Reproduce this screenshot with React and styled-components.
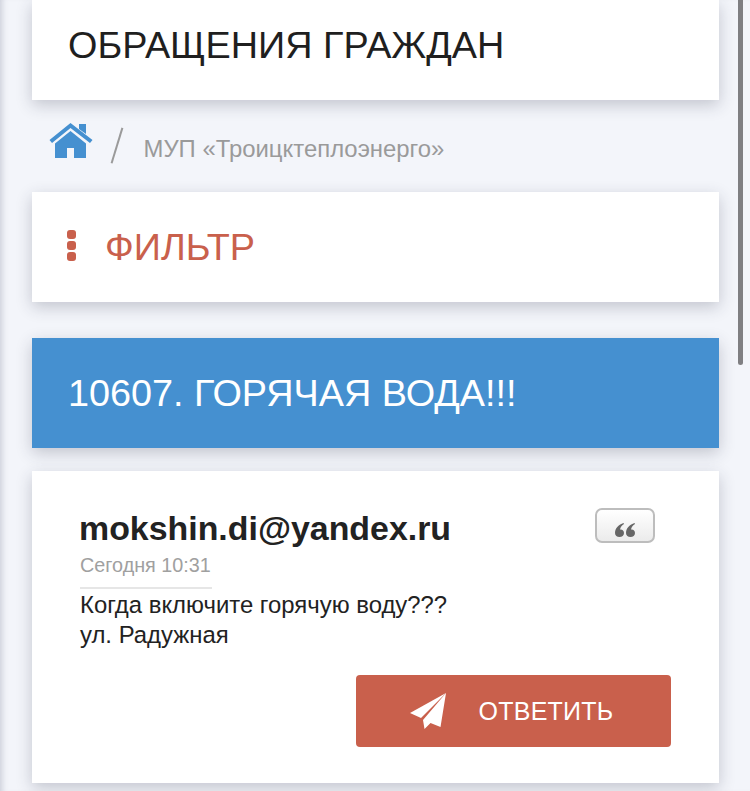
import React from 'react';
import styled, { createGlobalStyle } from 'styled-components';

const GlobalStyle = createGlobalStyle`
  html, body {
    margin: 0;
    padding: 0;
    height: 100%;
    overflow: hidden;
    background: #f3f5fa;
    font-family: "Liberation Sans", Arial, sans-serif;
  }
`;

const Page = styled.div`
  position: relative;
  box-sizing: border-box;
  width: 750px;
  height: 791px;
  padding: 0 31px 0 32px;
  overflow: hidden;
  background: #f3f5fa;
  box-shadow: inset 7px 0 6px -5px rgba(60, 65, 95, 0.22);
`;

const Scrollbar = styled.div`
  position: absolute;
  top: 0;
  right: 7px;
  width: 5px;
  height: 365px;
  border-radius: 0 0 3px 3px;
  background: #7f7f82;
`;

const Card = styled.section`
  box-sizing: border-box;
  display: flex;
  align-items: center;
  height: ${(p) => p.$height}px;
  margin-bottom: ${(p) => p.$after || 0}px;
  padding-left: ${(p) => p.$pad || 36}px;
  background: ${(p) => p.$bg || '#fff'};
  box-shadow: 0 5px 15px rgba(40, 45, 70, 0.24);
`;

const PageTitle = styled.h1`
  margin: 0 0 10px;
  font-size: 37.8px;
  font-weight: 400;
  color: #1f1f1f;
`;

const Breadcrumbs = styled.nav`
  display: flex;
  align-items: center;
  height: 92px;
  padding-left: 17px;
  color: #9a9a9a;
  font-size: 23.9px;
`;

const HomeIcon = styled.svg`
  width: 44px;
  height: 36px;
  margin-bottom: 10px;
  fill: #4590d0;
`;

const Slash = styled.span`
  width: 1.5px;
  height: 37px;
  margin: -1px 26px 0 23px;
  background: #9a9a9a;
  transform: rotate(17deg);
`;

const CrumbText = styled.span`
  padding-top: 6px;
`;

const Dots = styled.div`
  display: flex;
  flex-direction: column;
  gap: 2px;
  margin: 0 29px 3px 0;
`;

const Dot = styled.span`
  width: 9px;
  height: 9px;
  border-radius: 3px;
  background: #c9604c;
`;

const FilterTitle = styled.h2`
  margin: 0;
  font-size: 37.8px;
  font-weight: 400;
  color: #c9604c;
`;

const TopicTitle = styled.h2`
  margin: 0;
  font-size: 37.8px;
  font-weight: 400;
  color: #fff;
`;

const Message = styled.article`
  position: relative;
  box-sizing: border-box;
  height: 312px;
  padding: 38px 48px 36px 48px;
  background: #fff;
  box-shadow: 0 5px 15px rgba(40, 45, 70, 0.24);
`;

const Author = styled.div`
  margin-left: -1px;
  font-size: 33.9px;
  font-weight: 700;
  line-height: 38px;
  color: #222;
`;

const QuoteButton = styled.button`
  position: absolute;
  top: 37px;
  right: 64px;
  box-sizing: border-box;
  display: flex;
  justify-content: center;
  align-items: flex-start;
  width: 60px;
  height: 35px;
  padding: 13px 0 0;
  border: 2px solid #bdbdbd;
  border-radius: 7px;
  background: linear-gradient(#fff, #ebebeb);
`;

const QuoteIcon = styled.svg`
  width: 20px;
  height: 14px;
  fill: #666;
`;

const Stamp = styled.div`
  box-sizing: border-box;
  width: 132px;
  height: 35px;
  margin-top: 7px;
  border-bottom: 2px solid #e6e6e6;
  font-size: 19.8px;
  line-height: 23px;
  color: #a0a0a0;
`;

const Body = styled.p`
  margin: 1px 0 0;
  font-size: 23.9px;
  line-height: 30px;
  color: #222;
`;

const Actions = styled.div`
  display: flex;
  justify-content: flex-end;
  margin-top: 25px;
`;

const ReplyButton = styled.button`
  display: flex;
  align-items: center;
  justify-content: center;
  gap: 33px;
  width: 315px;
  height: 72px;
  padding: 0 4px 0 0;
  border: 0;
  border-radius: 4px;
  background: #c9604c;
  color: #fff;
  font-family: inherit;
  font-size: 25px;
  letter-spacing: 0.25px;
`;

const PlaneIcon = styled.svg`
  width: 36px;
  height: 36px;
  fill: #fff;
`;

export default function App() {
  return (
    <>
      <GlobalStyle />
      <Page>
        <Card $height={100}>
          <PageTitle>ОБРАЩЕНИЯ ГРАЖДАН</PageTitle>
        </Card>
        <Breadcrumbs>
          <HomeIcon viewBox="0 0 44 36">
            <path d="M30 1h7v10l-7-5z" />
            <path d="M21.500 0 43.500 17l-2.500 3L21.500 5 3 20 .5 17z" />
            <path d="M6 20.500 21.500 8 37 20.500V35H25V25h-7v10H6z" />
          </HomeIcon>
          <Slash />
          <CrumbText>МУП «Троицктеплоэнерго»</CrumbText>
        </Breadcrumbs>
        <Card $height={110} $after={36} $pad={35}>
          <Dots>
            <Dot />
            <Dot />
            <Dot />
          </Dots>
          <FilterTitle>ФИЛЬТР</FilterTitle>
        </Card>
        <Card $height={110} $after={23} $bg="#4590d0">
          <TopicTitle>10607. ГОРЯЧАЯ ВОДА!!!</TopicTitle>
        </Card>
        <Message>
          <Author>mokshin.di@yandex.ru</Author>
          <QuoteButton aria-label="Цитировать">
            <QuoteIcon viewBox="0 0 20 14">
              <path d="M8.500 0C4 1.500 0 5 0 10c0 2.500 2 4 4.500 4S9 12.500 9 10 7 6 5 6.500C5.500 4 7 2 9 1z" />
              <path d="M19.500 0C15 1.500 11 5 11 10c0 2.500 2 4 4.500 4s4.500-1.500 4.500-4-2-4-4-3.500c.5-2.500 2-4.500 4-5.500z" />
            </QuoteIcon>
          </QuoteButton>
          <Stamp>Сегодня 10:31</Stamp>
          <Body>
            Когда включите горячую воду???
            <br />
            ул. Радужная
          </Body>
          <Actions>
            <ReplyButton>
              <PlaneIcon viewBox="0 0 36 36">
                <path d="M36 0 0 20l11 5z" />
                <path d="M36 0 13 27l1.500 9 6-6 10 4z" />
              </PlaneIcon>
              ОТВЕТИТЬ
            </ReplyButton>
          </Actions>
        </Message>
        <Scrollbar />
      </Page>
    </>
  );
}
